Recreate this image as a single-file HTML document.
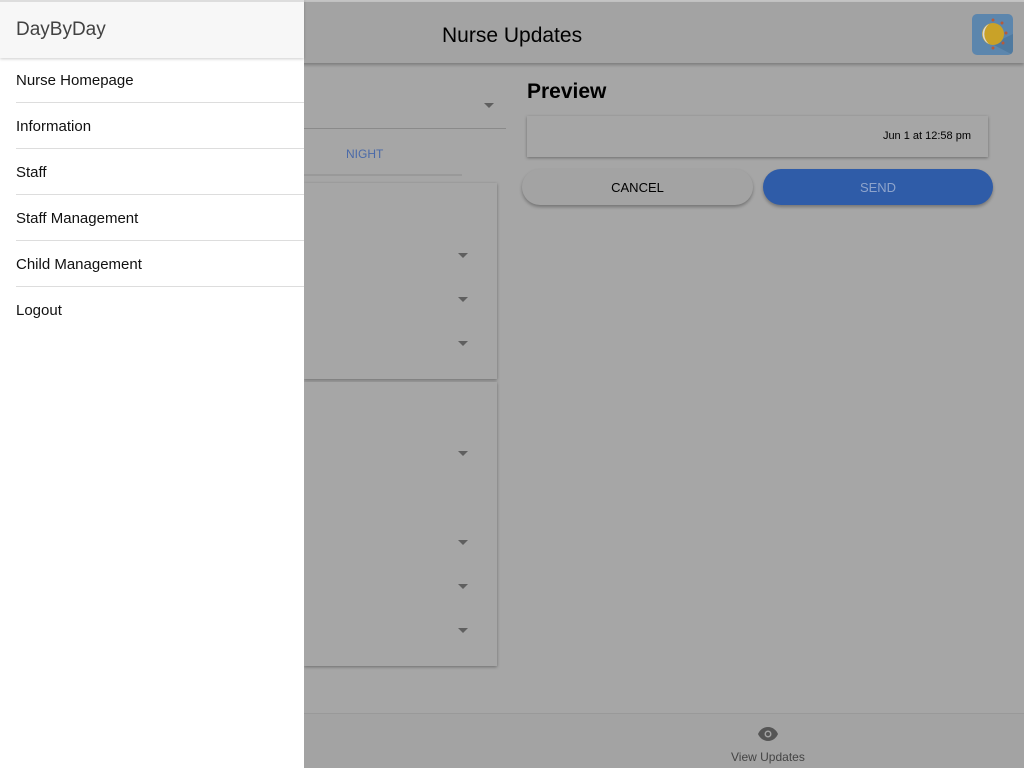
<!DOCTYPE html>
<html><head><meta charset="utf-8"><style>
*{box-sizing:border-box;margin:0;padding:0}
body{width:1024px;height:768px;overflow:hidden;background:#a6a6a6;font-family:"Liberation Sans",sans-serif;position:relative}
.top{position:absolute;left:0;top:0;width:1024px;height:3px;background:#c4c4c4}
.appbar{position:absolute;left:0;top:2px;width:1024px;height:61px;background:#a3a3a3;box-shadow:0 2px 3px rgba(0,0,0,.25)}
.title{position:absolute;left:442px;top:22px;font-size:21px;color:#000}
.logo{position:absolute;left:972px;top:12px;width:41px;height:41px;border-radius:5px;background:#5c86ad;overflow:hidden}
.sel{position:absolute;left:304px;top:128px;width:202px;height:1px;background:#8a8a8a}
.arrow{position:absolute;width:0;height:0;border-left:5px solid transparent;border-right:5px solid transparent;border-top:5px solid #5f5f5f}
.night{position:absolute;left:346px;top:147px;font-size:12px;color:#4a6aa8}
.tabline{position:absolute;left:304px;top:174px;width:158px;height:2px;background:#999}
.card{position:absolute;left:304px;width:193px;background:#a6a6a6;box-shadow:0 1px 3px rgba(0,0,0,.35)}
.preview{position:absolute;left:527px;top:80px;font-size:21px;font-weight:bold;color:#000}
.pcard{position:absolute;left:527px;top:116px;width:461px;height:41px;background:#a6a6a6;box-shadow:0 1px 3px rgba(0,0,0,.35);font-size:11px;color:#000}
.btn{position:absolute;top:169px;height:36px;border-radius:18px;text-align:center;line-height:37px;font-size:13px}
.bottom{position:absolute;left:0;top:713px;width:1024px;height:55px;background:#a3a3a3;border-top:1px solid #999}
.drawer{position:absolute;left:0;top:0;width:304px;height:768px;background:#fff}
.dh{height:58px;background:#f7f7f7;box-shadow:0 1px 3px rgba(0,0,0,.2);font-size:19px;color:#424242;padding:17px 0 0 16px;position:relative;border-top:2px solid #ddd}
.item{height:46px;font-size:15px;color:#111;padding:14px 0 0 16px;position:relative}
.item:after{content:"";position:absolute;left:16px;right:0;bottom:1px;height:1px;background:#ddd}
.item.last:after{display:none}
</style></head><body>
<div class="top"></div>
<div class="appbar"><div class="title">Nurse Updates</div>
<div class="logo"><svg width="41" height="41" viewBox="0 0 41 41"><path d="M20 30 L41 41 L41 20 Z" fill="#4f7aa0"/><circle cx="21" cy="20" r="11" fill="#c9a228"/><path d="M17 10 A11 11 0 0 0 17 30 A13 13 0 0 1 17 10Z" fill="#d8d8d8"/><g fill="#b85a3a"><circle cx="21" cy="6" r="1.5"/><circle cx="30" cy="9" r="1.5"/><circle cx="34" cy="19" r="1.5"/><circle cx="31" cy="29" r="1.5"/><circle cx="21" cy="34" r="1.5"/></g></svg></div></div>
<div class="arrow" style="left:484px;top:103px"></div>
<div class="sel"></div>
<div class="night">NIGHT</div>
<div class="tabline"></div>
<div class="card" style="top:183px;height:196px"></div>
<div class="card" style="top:382px;height:284px"></div>
<div class="arrow" style="left:458px;top:253px"></div>
<div class="arrow" style="left:458px;top:297px"></div>
<div class="arrow" style="left:458px;top:341px"></div>
<div class="arrow" style="left:458px;top:451px"></div>
<div class="arrow" style="left:458px;top:540px"></div>
<div class="arrow" style="left:458px;top:584px"></div>
<div class="arrow" style="left:458px;top:628px"></div>
<div class="preview">Preview</div>
<div class="pcard"><span style="position:absolute;right:17px;top:14px">Jun 1 at 12:58 pm</span></div>
<div class="btn" style="left:522px;width:231px;background:#a3a3a3;color:#000;box-shadow:0 2px 3px rgba(0,0,0,.3)">CANCEL</div>
<div class="btn" style="left:763px;width:230px;background:#2f5ca8;color:#8ea4cc;box-shadow:0 2px 3px rgba(0,0,0,.3)">SEND</div>
<div class="bottom">
<svg style="position:absolute;left:757px;top:12px" width="22" height="16" viewBox="0 0 22 16"><path d="M11 1C6 1 2.5 4.5 1 8c1.5 3.5 5 7 10 7s8.5-3.5 10-7C19.5 4.5 16 1 11 1z" fill="#555"/><circle cx="11" cy="8" r="3.5" fill="#a3a3a3"/><circle cx="11" cy="8" r="2" fill="#555"/></svg>
<div style="position:absolute;left:731px;top:36px;font-size:12px;color:#444">View Updates</div></div>
<div class="drawer">
<div class="dh">DayByDay</div>
<div class="item">Nurse Homepage</div>
<div class="item">Information</div>
<div class="item">Staff</div>
<div class="item">Staff Management</div>
<div class="item">Child Management</div>
<div class="item last">Logout</div>
</div>
</body></html>
